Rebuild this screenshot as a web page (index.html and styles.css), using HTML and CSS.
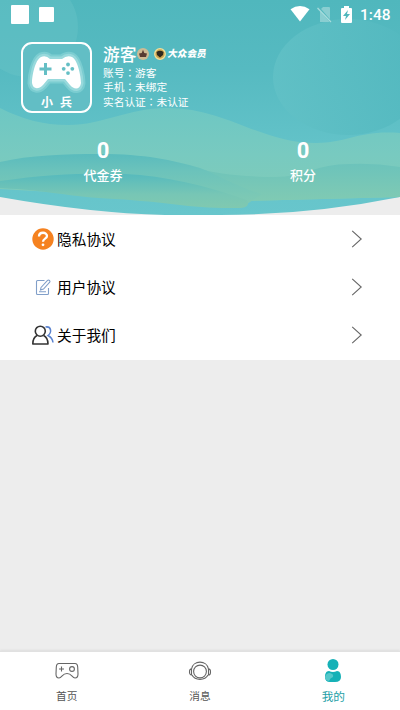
FILE: index.html
```html
<!DOCTYPE html>
<html lang="zh-CN">
<head>
<meta charset="utf-8">
<title>我的</title>
<link rel="stylesheet" href="styles.css">
</head>
<body>
<header class="hero">
  <svg class="hero-bg" viewBox="0 0 400 215" preserveAspectRatio="none" aria-hidden="true">
    <defs>
      <linearGradient id="sky" x1="0" y1="0" x2="0" y2="1"><stop offset="0" stop-color="#50b7bd"/><stop offset=".32" stop-color="#56bac1"/><stop offset=".66" stop-color="#62c2c8"/><stop offset="1" stop-color="#68c6cc"/></linearGradient>
      <linearGradient id="orb" x1="0" y1="0" x2="1" y2="0"><stop offset="0" stop-color="#62c1c6"/><stop offset="1" stop-color="#52b8bf"/></linearGradient>
      <linearGradient id="hill" x1="0" y1="0" x2="0" y2="1"><stop offset="0" stop-color="#6ec7c3"/><stop offset=".5" stop-color="#78cac0"/><stop offset="1" stop-color="#80cbb7"/></linearGradient>
      <linearGradient id="mid" x1="0" y1="0" x2="0" y2="1"><stop offset="0" stop-color="#5abbbd"/><stop offset=".35" stop-color="#6cc3bb"/><stop offset="1" stop-color="#80cab3"/></linearGradient>
      <linearGradient id="right" x1="0" y1="0" x2="0" y2="1"><stop offset="0" stop-color="#6cc3bb"/><stop offset="1" stop-color="#80cab3"/></linearGradient>
      <linearGradient id="low" x1="0" y1="0" x2="0" y2="1"><stop offset="0" stop-color="#56babd"/><stop offset=".6" stop-color="#77c6b5"/><stop offset="1" stop-color="#80c9b0"/></linearGradient>
    </defs>
    <path fill="url(#sky)" d="M0 0H400V197Q310 215 220 215H165Q90 213 0 197Z"/>
    <circle cx="28" cy="27" r="50" fill="#6bc6c9" opacity=".38"/>
    <ellipse cx="348" cy="77" rx="75" ry="58" fill="url(#orb)" opacity=".8"/>
    <path fill="url(#hill)" d="M0 108C22 119 43 125 68 125C104 125 127 108 167 108C226 108 260 143 316 143C348 143 358 130 400 133V197L247 201Q100 195 0 189Z"/>
    <path fill="url(#right)" d="M196 168C215 173 240 177 275 177C305 177 316 164 350 164Q375 163 400 167V197L247 201L196 190Z"/>
    <path fill="url(#mid)" d="M0 162C30 155 65 154 100 154C145 154 172 160 200 168C220 176 240 188 262 194L247 204C185 205 160 195 110 194Q45 190 0 188Z"/>
    <path fill="url(#low)" d="M0 181C48 174 86 173 125 174C165 176 205 185 247 200Q251 207 240 208C190 209 170 202 115 199C70 197 45 190 0 188Z"/>
  </svg>

  <div class="status">
    <i class="square square-lg"></i>
    <i class="square square-sm"></i>
    <span class="status-right">
      <svg width="20" height="16" viewBox="0 0 20 16"><path fill="#fff" d="M.5 3.2Q10-3.2 19.5 3.2L10 15.5Z"/></svg>
      <svg class="sim" width="16" height="17" viewBox="0 0 16 17"><path fill="#89ced1" d="M3 4L6 1H12Q13 1 13 2V16H3Z"/><path stroke="#56b9be" stroke-width="2" d="M1 1L14 16"/><path stroke="#a8dcdd" stroke-width="1.2" d="M.5 2L14 16"/></svg>
      <svg class="battery" width="11" height="17" viewBox="0 0 11 17"><path fill="#fff" d="M3 0H8V2H10Q11 2 11 3V16Q11 17 10 17H1Q0 17 0 16V3Q0 2 1 2H3Z"/><path fill="#50b7bd" d="M7 4L2 10H5L4 14L9 8H6Z"/></svg>
      <b class="time">1:48</b>
    </span>
  </div>

  <div class="profile">
    <div class="avatar">
      <svg width="60" height="46" viewBox="0 0 60 46">
        <path d="M14 9Q19 7 23 11H35Q40 7 45 9C51 12 54 29 54 35C53 42 47 42 43 37L38 31H21L16 37C11 42 6 41 5 35C5 28 8 12 14 9Z" fill="#fff" stroke="#7bcdd1" stroke-width="9" stroke-linejoin="round"/>
        <path d="M14 9Q19 7 23 11H35Q40 7 45 9C51 12 54 29 54 35C53 42 47 42 43 37L38 31H21L16 37C11 42 6 41 5 35C5 28 8 12 14 9Z" fill="#fff" stroke="#98d9dc" stroke-width="5" stroke-linejoin="round"/>
        <path d="M14 9Q19 7 23 11H35Q40 7 45 9C51 12 54 29 54 35C53 42 47 42 43 37L38 31H21L16 37C11 42 6 41 5 35C5 28 8 12 14 9Z" fill="#fff"/>
        <path d="M18.500 15V27M12.500 21H24.500" stroke="#65bfc5" stroke-width="3"/>
        <g fill="#65bfc5"><circle cx="41" cy="16.500" r="1.900"/><circle cx="36.700" cy="20.800" r="1.900"/><circle cx="45.300" cy="20.800" r="1.900"/><circle cx="41" cy="25.100" r="1.900"/></g>
      </svg>
      <span class="brand">小兵</span>
    </div>
    <div class="info">
      <div class="name-row">
        <span class="name">游客</span>
        <svg class="medal" width="12" height="12" viewBox="0 0 12 12"><circle cx="6" cy="6" r="6" fill="#cebb94"/><path fill="#573b32" d="M6 1.800L7.300 5L10 5.500L9 9H3L2 5.500L4.700 5Z"/></svg>
        <svg class="badge" width="12" height="12" viewBox="0 0 12 12"><circle cx="6" cy="6" r="5.300" fill="#c9a550" stroke="#f3df9a" stroke-width="1.300"/><path fill="#30291d" d="M2.500 4Q6 1.500 9.500 4L9 7L6 9.500L3 7Z"/></svg>
        <span class="member">大众会员</span>
      </div>
      <div class="line">账号<span class="colon" lang="zh-TW">：</span>游客</div>
      <div class="line">手机<span class="colon" lang="zh-TW">：</span>未绑定</div>
      <div class="line">实名认证<span class="colon" lang="zh-TW">：</span>未认证</div>
    </div>
  </div>

  <div class="stats">
    <div class="stat"><b>0</b><span>代金券</span></div>
    <div class="stat"><b>0</b><span>积分</span></div>
  </div>
</header>

<main class="menu">
  <a class="row">
    <svg class="row-icon" width="22" height="22" viewBox="0 0 22 22"><circle cx="11" cy="11" r="10.700" fill="#f58220"/><path d="M7 8.500C7 3.500 15 3.700 15 8C15 10.800 11 10.500 11 13.700" fill="none" stroke="#fff" stroke-width="2.300"/><circle cx="11" cy="16.800" r="1.400" fill="#fff"/></svg>
    <span>隐私协议</span>
    <svg class="chevron" width="12" height="20" viewBox="0 0 12 20"><path d="M1.200 1.800L10.200 10L1.200 18.200"/></svg>
  </a>
  <a class="row">
    <svg class="row-icon" width="22" height="22" viewBox="0 0 22 22" fill="none" stroke="#819fc9" stroke-width="1.100"><path d="M12.500 4.500H5.500Q4.500 4.500 4.500 5.500V17.500Q4.500 18.500 5.500 18.500H15.500Q16.500 18.500 16.500 17.500V12"/><path d="M9 11.500L15.500 4.500Q16.500 3.500 17.500 4.500Q18.500 5.500 17.500 6.500L11.500 13L8.500 14Z M7 15.800H14"/></svg>
    <span>用户协议</span>
    <svg class="chevron" width="12" height="20" viewBox="0 0 12 20"><path d="M1.200 1.800L10.200 10L1.200 18.200"/></svg>
  </a>
  <a class="row">
    <svg class="row-icon" width="22" height="22" viewBox="0 0 22 22" fill="none"><path stroke="#5b83cf" stroke-width="1.500" d="M13.500 3C19.500 2 20 8.500 16 11.500C19 13 20.500 15 21 18.500"/><circle cx="8.300" cy="7.200" r="5" stroke="#333" stroke-width="1.600"/><path stroke="#333" stroke-width="1.600" stroke-linejoin="round" d="M5 11.500C2 13 .8 15.500 .8 20H16C16 15.500 14.500 13 11.600 11.500"/></svg>
    <span>关于我们</span>
    <svg class="chevron" width="12" height="20" viewBox="0 0 12 20"><path d="M1.200 1.800L10.200 10L1.200 18.200"/></svg>
  </a>
</main>

<nav class="tabs">
  <a class="tab">
    <svg width="24" height="24" viewBox="0 0 24 24" fill="none" stroke="#666" stroke-width="1.100"><path d="M4 4.500H20Q22.500 4.500 22.700 8L23 15Q23 19 20 19C17 19 17 14.500 12 14.500C7 14.500 7 19 4 19Q1 19 1 15L1.300 8Q1.500 4.500 4 4.500ZM6.500 7.500V12.500M4 10H9"/><circle cx="17" cy="10" r="2.400"/></svg>
    <span>首页</span>
  </a>
  <a class="tab">
    <svg width="24" height="24" viewBox="0 0 24 24" fill="none" stroke="#666" stroke-width="1.100"><circle cx="12" cy="12.500" r="6.400"/><path d="M3.500 10C5 .8 19 .8 20.500 10M4 16C7 21.800 17 21.800 20 16M3.500 9.800V16C.8 16 .8 9.800 3.500 9.800ZM20.500 9.800V16C23.200 16 23.200 9.800 20.500 9.800Z"/></svg>
    <span>消息</span>
  </a>
  <a class="tab active">
    <svg width="24" height="24" viewBox="0 0 24 24"><circle cx="12" cy="5.500" r="5.500" fill="#16b1b7"/><path fill="#16b1b7" d="M8 12Q12 14 16 12C19 12 20 15 20 18Q20 23 14 23H9Q4 23 4 18C4 15 5 12 8 12Z"/><path fill="#55c8ca" d="M4 18Q5 14 9 14Q13 15 12 18Q9 19 8 22Q4 21.500 4 18Z"/></svg>
    <span>我的</span>
  </a>
</nav>
</body>
</html>
```
FILE: styles.css
```css
* { box-sizing: border-box; }

body {
  margin: 0;
  height: 710px;
  display: flex;
  flex-direction: column;
  background: #ededed;
  font-family: "Noto Sans CJK SC", sans-serif;
  overflow: hidden;
}

svg { display: block; flex: none; }

.hero {
  position: relative;
  isolation: isolate;
  height: 215px;
  color: #fff;
}

.hero-bg {
  position: absolute;
  z-index: -1;
  inset: 0;
  width: 100%;
  height: 100%;
}

.status {
  height: 28px;
  display: flex;
  align-items: center;
  padding: 0 9px 0 11px;
}

.square { background: #fff; border-radius: 1px; }
.square-lg { width: 18px; height: 19px; }
.square-sm { width: 15px; height: 15px; margin-left: 10px; }

.status-right {
  display: flex;
  align-items: center;
  margin-left: auto;
}

.sim { margin-left: 7px; }
.battery { margin-left: 8px; }

.time {
  width: 31px;
  margin-left: 8px;
  font: 500 15.5px/28px Roboto, sans-serif;
  padding-top: 1px;
}

.profile {
  height: 85px;
  display: flex;
  padding: 14px 0 0 21px;
}

.avatar {
  width: 71px;
  height: 71px;
  display: flex;
  flex-direction: column;
  align-items: center;
  padding-top: 4px;
  border: 2px solid #fff;
  border-radius: 11px;
  background: #62bec5;
}

.brand {
  padding-left: 7px;
  font-size: 12px;
  font-weight: 700;
  line-height: 15px;
  letter-spacing: 7px;
}

.info { padding: 1px 0 0 11px; }

.name-row {
  height: 22px;
  display: flex;
  align-items: center;
  margin-bottom: 1px;
}

.name {
  font-size: 16.7px;
  font-weight: 500;
  line-height: 22px;
}

.medal { margin-left: 1px; }
.badge { margin-left: 5px; }

.member {
  margin: 0 0 2px 2px;
  font-size: 9.7px;
  font-weight: 900;
  line-height: 12px;
  transform: skewX(-10deg);
}

.line {
  height: 14.4px;
  font-size: 10.7px;
  line-height: 14.4px;
}

.colon { font-family: "Noto Sans CJK TC", sans-serif; }

.stats {
  display: flex;
  padding: 26px 0 0 3px;
}

.stat {
  flex: none;
  width: 200px;
  display: flex;
  flex-direction: column;
  align-items: center;
}

.stat b { font: 700 22px/24px Roboto, sans-serif; }
.stat span { font-size: 13px; font-weight: 500; line-height: 20px; margin-top: 2px; }

.menu {
  height: 145px;
  background: #fff;
}

.row {
  height: 48px;
  display: flex;
  align-items: center;
  padding: 0 37px 0 32px;
  color: #000;
  font-size: 14.7px;
}

.row span { margin: 0 0 2px 3px; }

.chevron {
  margin-left: auto;
  fill: none;
  stroke: #666;
  stroke-width: 1.1;
}

.tabs {
  height: 59px;
  margin-top: auto;
  display: flex;
  background: #fff;
  border-top: 1px solid #e1e1e1;
  box-shadow: 0 -1px 2px #ddd;
}

.tab {
  flex: 1;
  display: flex;
  flex-direction: column;
  align-items: center;
  padding-top: 7px;
  color: #555;
  font-size: 10.7px;
  line-height: 16px;
}

.tab span { margin-top: 5px; }

.active {
  color: #249fa7;
  font-size: 11.7px;
}
```
